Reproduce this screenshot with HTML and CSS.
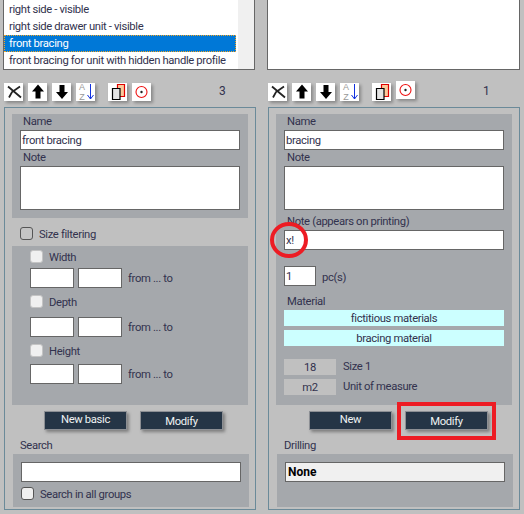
FILE: index.html
```html
<!DOCTYPE html>
<html lang="en">

<head>
  <meta charset="UTF-8">
  <title>Bracing</title>
  <link rel="stylesheet" href="styles.css">
</head>

<body>
  <div class="app">

    <div class="col">
      <div class="list list-left">
        <ul class="items">
          <li>right side - visible</li>
          <li>right side drawer unit - visible</li>
          <li class="selected">front bracing</li>
          <li>front bracing for unit with hidden handle profile</li>
        </ul>
        <div class="scrollbar"></div>
      </div>

      <div class="toolbar">
        <button class="tool"><svg viewBox="0 0 19 18"><path d="M4 3.500 L17 14.500 M16 3.500 L8 9 L5 14.500" fill="none" stroke="#222" stroke-width="1.800"/></svg></button>
        <button class="tool"><svg viewBox="0 0 19 18"><path d="M10 1.500 L16 8.500 H12.500 V15.500 H7.500 V8.500 H4 Z" fill="#000"/></svg></button>
        <button class="tool"><svg viewBox="0 0 19 18"><path d="M10 16 L16 9 H12.500 V2 H7.500 V9 H4 Z" fill="#000"/></svg></button>
        <button class="tool az"><span class="az-text">A<br>Z</span><svg viewBox="0 0 19 18"><path d="M14.500 1 V16 M11.500 12 L14.500 16 L17.500 12" fill="none" stroke="#1030e0"/></svg></button>
        <button class="tool tool-gap"><svg viewBox="0 0 19 18"><path d="M9.500 1.500 H16.500 V13.500 H9.500 Z" fill="#fbc99b" stroke="#e00000" stroke-width="1.200"/><path d="M4.500 5.500 H12 V16.500 H4.500 Z" fill="#e4e4e4" stroke="#000" stroke-width="1.200"/></svg></button>
        <button class="tool"><svg viewBox="0 0 19 18"><circle cx="9.500" cy="9" r="5.500" fill="none" stroke="#ee1111" stroke-width="1.100"/><circle cx="9.500" cy="9" r="1.200" fill="#222"/></svg></button>
        <span class="count">3</span>
      </div>

      <div class="panel">
        <div class="block block-top">
          <label class="field-label">Name</label>
          <input class="text-input" value="front bracing">
          <label class="field-label">Note</label>
          <textarea class="text-area"></textarea>
        </div>

        <div class="check-line size-line">
          <input type="checkbox" class="check check-dark">
          <span>Size filtering</span>
        </div>

        <div class="block block-size">
          <div class="check-line first"><input type="checkbox" class="check check-light"><span>Width</span></div>
          <div class="range">
            <input class="small-input"><input class="small-input"><span>from ... to</span>
          </div>
          <div class="check-line second"><input type="checkbox" class="check check-light"><span>Depth</span></div>
          <div class="range">
            <input class="small-input"><input class="small-input"><span>from ... to</span>
          </div>
          <div class="check-line third"><input type="checkbox" class="check check-light"><span>Height</span></div>
          <div class="range">
            <input class="small-input"><input class="small-input"><span>from ... to</span>
          </div>
        </div>

        <div class="buttons">
          <button class="btn btn-up">New basic</button>
          <button class="btn">Modify</button>
        </div>

        <div class="section-title">Search</div>
        <div class="block block-bottom">
          <input class="text-input">
          <div class="check-line search-line">
            <input type="checkbox" class="check check-search">
            <span>Search in all groups</span>
          </div>
        </div>
      </div>
    </div>

    <div class="col">
      <div class="list list-right"></div>

      <div class="toolbar">
        <button class="tool"><svg viewBox="0 0 19 18"><path d="M4 3.500 L17 14.500 M16 3.500 L8 9 L5 14.500" fill="none" stroke="#222" stroke-width="1.800"/></svg></button>
        <button class="tool"><svg viewBox="0 0 19 18"><path d="M10 1.500 L16 8.500 H12.500 V15.500 H7.500 V8.500 H4 Z" fill="#000"/></svg></button>
        <button class="tool"><svg viewBox="0 0 19 18"><path d="M10 16 L16 9 H12.500 V2 H7.500 V9 H4 Z" fill="#000"/></svg></button>
        <button class="tool az"><span class="az-text">A<br>Z</span><svg viewBox="0 0 19 18"><path d="M14.500 1 V16 M11.500 12 L14.500 16 L17.500 12" fill="none" stroke="#1030e0"/></svg></button>
        <button class="tool tool-gap"><svg viewBox="0 0 19 18"><path d="M9.500 1.500 H16.500 V13.500 H9.500 Z" fill="#fbc99b" stroke="#e00000" stroke-width="1.200"/><path d="M4.500 5.500 H12 V16.500 H4.500 Z" fill="#e4e4e4" stroke="#000" stroke-width="1.200"/></svg></button>
        <button class="tool tool-high"><svg viewBox="0 0 19 18"><circle cx="9.500" cy="9" r="5.500" fill="none" stroke="#ee1111" stroke-width="1.100"/><circle cx="9.500" cy="9" r="1.200" fill="#222"/></svg></button>
        <span class="count">1</span>
      </div>

      <div class="panel">
        <div class="block block-detail">
          <label class="field-label">Name</label>
          <input class="text-input" value="bracing">
          <label class="field-label">Note</label>
          <textarea class="text-area"></textarea>
          <label class="field-label note-print">Note (appears on printing)</label>
          <input class="text-input" value="x!">

          <div class="qty">
            <input class="qty-input" value="1">
            <span>pc(s)</span>
          </div>

          <label class="field-label material-label">Material</label>
          <div class="material">fictitious materials</div>
          <div class="material">bracing material</div>

          <div class="prop prop-first"><span class="prop-value">18</span><span>Size 1</span></div>
          <div class="prop"><span class="prop-value">m2</span><span>Unit of measure</span></div>
        </div>

        <div class="buttons buttons-right">
          <button class="btn btn-up">New</button>
          <button class="btn">Modify</button>
        </div>

        <div class="section-title">Drilling</div>
        <div class="block block-bottom">
          <input class="text-input drill-input" value="None">
        </div>
      </div>
    </div>

    <div class="mark-circle"></div>
    <div class="mark-rect"></div>
  </div>
</body>

</html>
```

FILE: styles.css
```css
:root {
  --bg: #c0c0c0;
  --block: #a5a8ac;
  --text: #32324e;
  --line: #666;
  --red: #ed1c24;
  --navy: #253546;
}

* {
  box-sizing: border-box;
}

body {
  margin: 0;
  background: var(--bg);
  color: var(--text);
  font-family: Roboto, "Noto Sans", sans-serif;
  font-size: 11.25px;
  letter-spacing: -0.35px;
  overflow: hidden;
}

.app {
  position: relative;
  display: flex;
  gap: 12px;
  width: 524px;
  height: 514px;
  padding-left: 4px;
}

.col {
  width: 252px;
}

/* lists on top */
.list {
  height: 70px;
  background: #fff;
  border: 1px solid var(--line);
  border-top: 0;
}

.list-left {
  display: flex;
  width: 252px;
  margin-left: -1px;
}

.list-right {
  margin-left: -1px;
}

.items {
  flex: 1;
  min-width: 0;
  list-style: none;
  margin: 0 2px 0 0;
  padding: 1px 0 0;
  overflow: hidden;
}

.items li {
  height: 17px;
  line-height: 17px;
  padding-left: 5px;
  white-space: nowrap;
}

.items .selected {
  background: #0078d7;
  color: #fff;
  outline: 1px dotted #f5a623;
  outline-offset: -1px;
}

.scrollbar {
  width: 16px;
  background: #f0f0f0;
}

/* toolbar */
.toolbar {
  display: flex;
  align-items: flex-start;
  gap: 5px;
  height: 37px;
  padding-top: 13px;
}

.tool {
  position: relative;
  width: 19px;
  height: 18px;
  padding: 0;
  border: 0;
  background: #fff;
  box-shadow: 2px 2px 3px rgba(0, 0, 0, 0.3);
}

.tool svg {
  display: block;
  width: 19px;
  height: 18px;
}

.tool-gap {
  margin-left: 8px;
}

.tool-high {
  margin-top: -2px;
}

.az-text {
  position: absolute;
  left: 3px;
  top: -1px;
  color: #999;
  font-family: "Liberation Sans", sans-serif;
  font-size: 9px;
  letter-spacing: 0;
  line-height: 10px;
}

.count {
  margin-left: 63px;
  margin-top: 1px;
  font-size: 12px;
}

/* panels */
.panel {
  height: 403px;
  padding: 6px 7px 0;
  border: 1px solid #6b8a99;
}

.block {
  width: 236px;
  background: var(--block);
  padding: 0 8px;
}

.block-top {
  height: 104px;
}

.block-size {
  height: 159px;
  padding-left: 18px;
}

.block-detail {
  height: 291px;
}

.block-bottom {
  height: 53px;
  margin-left: 1px;
  padding-top: 8px;
}

.field-label {
  display: block;
  height: 16px;
  line-height: 16px;
  padding-left: 3px;
}

.note-print {
  margin-top: 4px;
}

.text-input,
.text-area,
.small-input,
.qty-input {
  display: block;
  margin: 0;
  padding: 0 1px;
  border: 1px solid var(--line);
  border-radius: 0;
  background: #fff;
  color: var(--text);
  font: inherit;
  letter-spacing: inherit;
  outline: 0;
}

.text-input {
  width: 220px;
  height: 20px;
}

.text-area {
  width: 220px;
  height: 44px;
  resize: none;
}

/* checkboxes */
.check {
  appearance: none;
  flex: none;
  width: 13px;
  height: 13px;
  margin: 0 6px 0 0;
  border-radius: 3px;
}

.check-dark {
  background: #c4c4c4;
  border: 1px solid #555;
}

.check-light {
  background: #f0f0f0;
  border: 1px solid #c4c4c4;
}

.check-search {
  background: #efefef;
  border: 1px solid #555;
}

.check-line {
  display: flex;
  align-items: flex-start;
}

.check-line span {
  padding-top: 1px;
  line-height: 13px;
}

.size-line {
  height: 28px;
  padding: 9px 0 0 8px;
}

.first {
  height: 22px;
  padding-top: 4px;
}

.second {
  height: 29px;
  padding-top: 7px;
}

.third {
  height: 27px;
  padding-top: 7px;
}

.range {
  display: flex;
  align-items: center;
  gap: 4px;
}

.range span {
  margin-left: 2px;
}

.small-input {
  width: 44px;
  height: 20px;
}

.search-line {
  margin-top: 5px;
}

/* buttons */
.buttons {
  display: flex;
  gap: 13px;
  height: 32px;
  padding: 6px 0 0 32px;
}

.buttons-right {
  padding-left: 33px;
}

.btn {
  width: 83px;
  height: 19px;
  padding: 1px 0 0;
  border: 1px solid #8c8f94;
  background: var(--navy);
  color: #eef2f2;
  font: inherit;
  letter-spacing: inherit;
  box-shadow: 2px 2px 3px rgba(0, 0, 0, 0.35);
}

.btn-up {
  padding: 0 0 3px;
}

.section-title {
  height: 17px;
  line-height: 18px;
  padding-left: 8px;
}

/* right side detail */
.qty {
  display: flex;
  align-items: center;
  gap: 6px;
  margin-top: 16px;
}

.qty span {
  padding-top: 2px;
}

.qty-input {
  width: 32px;
  height: 20px;
}

.material-label {
  margin-top: 8px;
}

.material {
  width: 220px;
  height: 16px;
  margin-bottom: 4px;
  background: #ccffff;
  line-height: 18px;
  text-align: center;
}

.prop {
  display: flex;
  gap: 7px;
  height: 16px;
  line-height: 15px;
  margin-top: 4px;
}

.prop-first {
  margin-top: 13px;
}

.prop-value {
  width: 52px;
  background: #c0c0c0;
  line-height: 17px;
  text-align: center;
}

.drill-input {
  background: #f0f0f0;
  color: #000;
  font-size: 12px;
  font-weight: bold;
  letter-spacing: 0;
  padding-left: 2px;
}

/* red marks drawn over the screenshot */
.mark-circle {
  position: absolute;
  left: 270px;
  top: 222px;
  width: 38px;
  height: 36px;
  border: 4px solid var(--red);
  border-radius: 50%;
}

.mark-rect {
  position: absolute;
  left: 397px;
  top: 402px;
  width: 99px;
  height: 38px;
  border: 4px solid var(--red);
}
```
